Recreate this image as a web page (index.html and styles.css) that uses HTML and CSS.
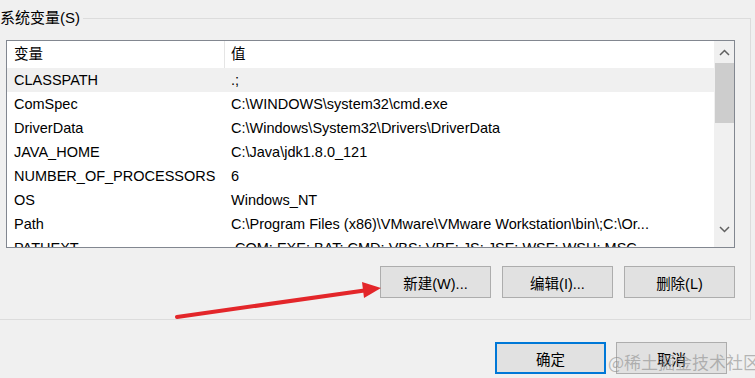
FILE: index.html
```html
<!DOCTYPE html>
<html lang="zh-CN">
<head>
    <meta charset="UTF-8">
    <title>环境变量</title>
    <link rel="stylesheet" href="styles.css">
</head>
<body>
    <div class="dialog">
        <fieldset class="group">
            <legend>系统变量(S)</legend>
            <div class="list">
                <div class="table">
                    <div class="row head">
                        <div class="cell name">变量</div>
                        <div class="cell value">值</div>
                    </div>
                    <div class="row selected">
                        <div class="cell name">CLASSPATH</div>
                        <div class="cell value">.;</div>
                    </div>
                    <div class="row">
                        <div class="cell name">ComSpec</div>
                        <div class="cell value">C:\WINDOWS\system32\cmd.exe</div>
                    </div>
                    <div class="row">
                        <div class="cell name">DriverData</div>
                        <div class="cell value">C:\Windows\System32\Drivers\DriverData</div>
                    </div>
                    <div class="row">
                        <div class="cell name">JAVA_HOME</div>
                        <div class="cell value">C:\Java\jdk1.8.0_121</div>
                    </div>
                    <div class="row">
                        <div class="cell name">NUMBER_OF_PROCESSORS</div>
                        <div class="cell value">6</div>
                    </div>
                    <div class="row">
                        <div class="cell name">OS</div>
                        <div class="cell value">Windows_NT</div>
                    </div>
                    <div class="row">
                        <div class="cell name">Path</div>
                        <div class="cell value">C:\Program Files (x86)\VMware\VMware Workstation\bin\;C:\Or...</div>
                    </div>
                    <div class="row">
                        <div class="cell name">PATHEXT</div>
                        <div class="cell value">.COM;.EXE;.BAT;.CMD;.VBS;.VBE;.JS;.JSE;.WSF;.WSH;.MSC</div>
                    </div>
                </div>
                <div class="scrollbar">
                    <div class="scroll-btn">
                        <svg width="11" height="7" viewBox="0 0 11 7"><path d="M1 6 L5.5 1.5 L10 6" fill="none" stroke="#606060" stroke-width="1.5"/></svg>
                    </div>
                    <div class="track"><div class="thumb"></div></div>
                    <div class="scroll-btn bottom">
                        <svg width="11" height="7" viewBox="0 0 11 7"><path d="M1 1 L5.5 5.5 L10 1" fill="none" stroke="#606060" stroke-width="1.5"/></svg>
                    </div>
                </div>
            </div>
            <div class="actions">
                <button class="btn">新建(W)...</button>
                <button class="btn">编辑(I)...</button>
                <button class="btn">删除(L)</button>
            </div>
        </fieldset>
        <div class="footer">
            <button class="btn primary">确定</button>
            <button class="btn">取消</button>
        </div>
    </div>

    <!-- 标注箭头 -->
    <svg class="annotation" width="755" height="378" viewBox="0 0 755 378">
        <line x1="177" y1="317" x2="368" y2="290" stroke="#e3262a" stroke-width="4" stroke-linecap="round"/>
        <polygon points="381,288 362,282 364,298" fill="#e3262a"/>
    </svg>

    <div class="watermark">@稀土掘金技术社区</div>
</body>
</html>
```

FILE: styles.css
```css
body {
    margin: 0;
    width: 755px;
    height: 378px;
    overflow: hidden;
    background: #f0f0f0;
    color: #000;
    font-family: "Liberation Sans", "Noto Sans CJK SC", sans-serif;
    font-size: 15px;
    position: relative;
}

.group {
    box-sizing: border-box;
    width: 761px;
    height: 312px;
    margin: 8px 0 0 -10px;
    padding: 0 15px 0 9px;
    border: 1px solid #dcdcdc;
    min-inline-size: 0;
}

.group legend {
    padding: 0 3px 0 0;
    line-height: 20px;
}

.list {
    display: flex;
    width: 729px;
    height: 208px;
    margin: 12px 0 0 6px;
    box-sizing: border-box;
    border: 1px solid #828790;
    background: #fff;
    overflow: hidden;
    font-size: 14.5px;
}

.table {
    flex: 1;
    min-width: 0;
    overflow: hidden;
}

.row {
    display: flex;
    height: 24px;
    line-height: 24px;
}

.row.head {
    height: 27px;
    line-height: 27px;
}

.row.selected {
    background: #f0f0f0;
}

.cell {
    padding-left: 7px;
    white-space: nowrap;
    overflow: hidden;
    box-sizing: border-box;
}

.cell.name {
    width: 217px;
    flex: none;
}

.cell.value {
    flex: 1;
    min-width: 0;
}

.row.head .cell.value {
    border-left: 1px solid #e5e5e5;
    padding-left: 6px;
}

.scrollbar {
    width: 20px;
    display: flex;
    flex-direction: column;
    background: #f0f0f0;
}

.scroll-btn {
    height: 22px;
    display: flex;
    align-items: center;
    justify-content: center;
}

.scroll-btn.bottom {
    height: 24px;
    align-items: flex-start;
    padding-top: 3px;
    box-sizing: border-box;
}

.track {
    flex: 1;
}

.thumb {
    height: 60px;
    margin-left: 1px;
    background: #cdcdcd;
}

.actions {
    display: flex;
    justify-content: flex-end;
    gap: 11px;
    margin-top: 18px;
}

.btn {
    width: 111px;
    height: 32px;
    padding: 0;
    border: 1px solid #adadad;
    background: #e1e1e1;
    color: #000;
    font-family: inherit;
    font-size: 14.5px;
}

.btn.primary {
    border: 2px solid #0078d7;
}

.footer {
    display: flex;
    justify-content: flex-end;
    gap: 10px;
    margin-top: 22px;
    padding-right: 28px;
}

.annotation {
    position: absolute;
    left: 0;
    top: 0;
    pointer-events: none;
}

.watermark {
    position: absolute;
    left: 608px;
    top: 349px;
    font-family: "Noto Sans CJK SC", sans-serif;
    font-size: 17px;
    color: rgba(140, 140, 140, 0.6);
    white-space: nowrap;
}
```
